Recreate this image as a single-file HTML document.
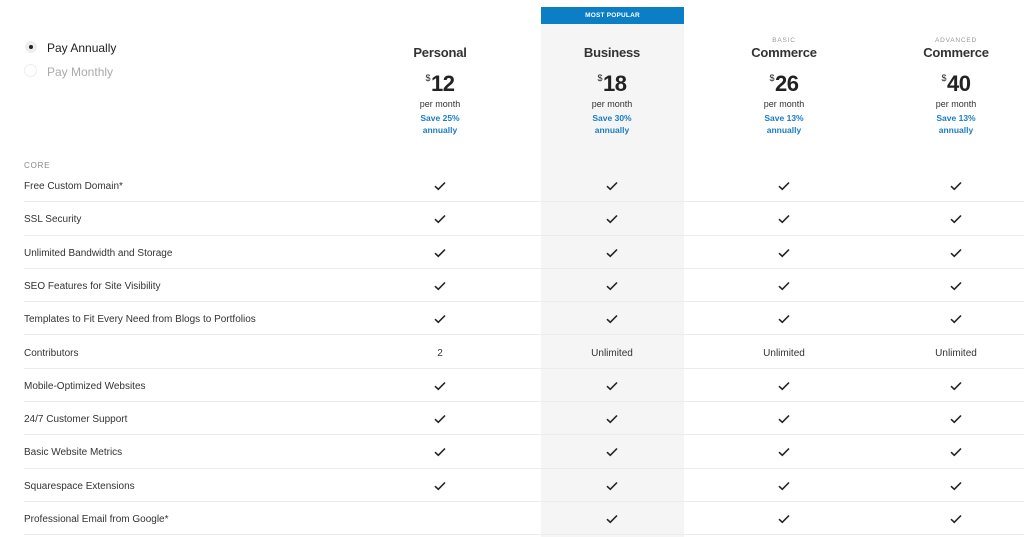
<!DOCTYPE html>
<html><head><meta charset="utf-8"><style>
*{margin:0;padding:0;box-sizing:border-box}
body{width:1024px;height:537px;background:#fff;font-family:"Liberation Sans",sans-serif;color:#222;position:relative;overflow:hidden}
.abs{position:absolute}
.biz{left:541px;top:7px;width:143px;height:530px;background:#f5f5f5}
.pop{left:541px;top:7px;width:143px;height:17px;background:#0b7ec6;color:#fff;font-size:6.5px;font-weight:bold;text-align:center;line-height:17px;letter-spacing:.2px}
.col{width:172px;text-align:center}
.tier{font-size:6.5px;color:#999;letter-spacing:.8px;height:8px}
.name{font-size:13px;font-weight:bold;color:#333;letter-spacing:-.2px}
.price{font-size:22px;font-weight:bold;color:#222;letter-spacing:-.5px;line-height:26px;height:26px}
.price sup{font-size:9px;font-weight:normal;vertical-align:10px;margin-right:1px}
.pm{font-size:9px;color:#333;line-height:12px;margin-top:7px}
.save{font-size:8.5px;color:#1a7dc4;font-weight:bold;line-height:12px;margin-top:2px}
.row{left:24px;width:1000px;height:33.3px;border-bottom:1px solid #ececec;font-size:10px;color:#333;line-height:35px}
.row span.c{position:absolute;width:60px;text-align:center;top:0}
.row svg{position:absolute;top:12px}
</style></head><body>
<div class="abs biz"></div>
<div class="abs pop">MOST POPULAR</div>

<div class="abs" style="left:25px;top:41px;width:12px;height:12px;border-radius:50%;background:#eee"></div>
<div class="abs" style="left:29px;top:45px;width:4px;height:4px;border-radius:50%;background:#222"></div>
<div class="abs" style="left:47px;top:41px;font-size:12px;color:#222">Pay Annually</div>
<div class="abs" style="left:24px;top:64px;width:13px;height:13px;border-radius:50%;border:1px solid #eee"></div>
<div class="abs" style="left:47px;top:65px;font-size:12px;color:#aaa">Pay Monthly</div>

<div class="abs col" style="left:354px;top:45px"><div class="name">Personal</div></div>
<div class="abs col" style="left:526px;top:45px"><div class="name">Business</div></div>
<div class="abs col" style="left:698px;top:37px"><div class="tier">BASIC</div><div class="name">Commerce</div></div>
<div class="abs col" style="left:870px;top:37px"><div class="tier">ADVANCED</div><div class="name">Commerce</div></div>

<div class="abs col" style="left:354px;top:65px"><div class="price"><sup>$</sup>12</div><div class="pm">per month</div><div class="save">Save 25%<br>annually</div></div>
<div class="abs col" style="left:526px;top:65px"><div class="price"><sup>$</sup>18</div><div class="pm">per month</div><div class="save">Save 30%<br>annually</div></div>
<div class="abs col" style="left:698px;top:65px"><div class="price"><sup>$</sup>26</div><div class="pm">per month</div><div class="save">Save 13%<br>annually</div></div>
<div class="abs col" style="left:870px;top:65px"><div class="price"><sup>$</sup>40</div><div class="pm">per month</div><div class="save">Save 13%<br>annually</div></div>

<div class="abs" style="left:24px;top:161px;font-size:8px;color:#888;letter-spacing:.8px">CORE</div>

<svg width="0" height="0" style="position:absolute"><defs><symbol id="ck" viewBox="0 0 12 10"><path d="M1 5.2 L4.3 8.3 L11 1.5" fill="none" stroke="#222" stroke-width="1.6"/></symbol></defs></svg>

<div class="abs row" style="top:169px">Free Custom Domain*<svg width="12" height="10" style="left:410px"><use href="#ck"/></svg><svg width="12" height="10" style="left:582px"><use href="#ck"/></svg><svg width="12" height="10" style="left:754px"><use href="#ck"/></svg><svg width="12" height="10" style="left:926px"><use href="#ck"/></svg></div>
<div class="abs row" style="top:202.3px">SSL Security<svg width="12" height="10" style="left:410px"><use href="#ck"/></svg><svg width="12" height="10" style="left:582px"><use href="#ck"/></svg><svg width="12" height="10" style="left:754px"><use href="#ck"/></svg><svg width="12" height="10" style="left:926px"><use href="#ck"/></svg></div>
<div class="abs row" style="top:235.6px">Unlimited Bandwidth and Storage<svg width="12" height="10" style="left:410px"><use href="#ck"/></svg><svg width="12" height="10" style="left:582px"><use href="#ck"/></svg><svg width="12" height="10" style="left:754px"><use href="#ck"/></svg><svg width="12" height="10" style="left:926px"><use href="#ck"/></svg></div>
<div class="abs row" style="top:268.9px">SEO Features for Site Visibility<svg width="12" height="10" style="left:410px"><use href="#ck"/></svg><svg width="12" height="10" style="left:582px"><use href="#ck"/></svg><svg width="12" height="10" style="left:754px"><use href="#ck"/></svg><svg width="12" height="10" style="left:926px"><use href="#ck"/></svg></div>
<div class="abs row" style="top:302.2px">Templates to Fit Every Need from Blogs to Portfolios<svg width="12" height="10" style="left:410px"><use href="#ck"/></svg><svg width="12" height="10" style="left:582px"><use href="#ck"/></svg><svg width="12" height="10" style="left:754px"><use href="#ck"/></svg><svg width="12" height="10" style="left:926px"><use href="#ck"/></svg></div>
<div class="abs row" style="top:335.5px">Contributors<span class="c" style="left:386px">2</span><span class="c" style="left:558px">Unlimited</span><span class="c" style="left:730px">Unlimited</span><span class="c" style="left:902px">Unlimited</span></div>
<div class="abs row" style="top:368.8px">Mobile-Optimized Websites<svg width="12" height="10" style="left:410px"><use href="#ck"/></svg><svg width="12" height="10" style="left:582px"><use href="#ck"/></svg><svg width="12" height="10" style="left:754px"><use href="#ck"/></svg><svg width="12" height="10" style="left:926px"><use href="#ck"/></svg></div>
<div class="abs row" style="top:402.1px">24/7 Customer Support<svg width="12" height="10" style="left:410px"><use href="#ck"/></svg><svg width="12" height="10" style="left:582px"><use href="#ck"/></svg><svg width="12" height="10" style="left:754px"><use href="#ck"/></svg><svg width="12" height="10" style="left:926px"><use href="#ck"/></svg></div>
<div class="abs row" style="top:435.4px">Basic Website Metrics<svg width="12" height="10" style="left:410px"><use href="#ck"/></svg><svg width="12" height="10" style="left:582px"><use href="#ck"/></svg><svg width="12" height="10" style="left:754px"><use href="#ck"/></svg><svg width="12" height="10" style="left:926px"><use href="#ck"/></svg></div>
<div class="abs row" style="top:468.7px">Squarespace Extensions<svg width="12" height="10" style="left:410px"><use href="#ck"/></svg><svg width="12" height="10" style="left:582px"><use href="#ck"/></svg><svg width="12" height="10" style="left:754px"><use href="#ck"/></svg><svg width="12" height="10" style="left:926px"><use href="#ck"/></svg></div>
<div class="abs row" style="top:502px">Professional Email from Google*<svg width="12" height="10" style="left:582px"><use href="#ck"/></svg><svg width="12" height="10" style="left:754px"><use href="#ck"/></svg><svg width="12" height="10" style="left:926px"><use href="#ck"/></svg></div>
</body></html>
